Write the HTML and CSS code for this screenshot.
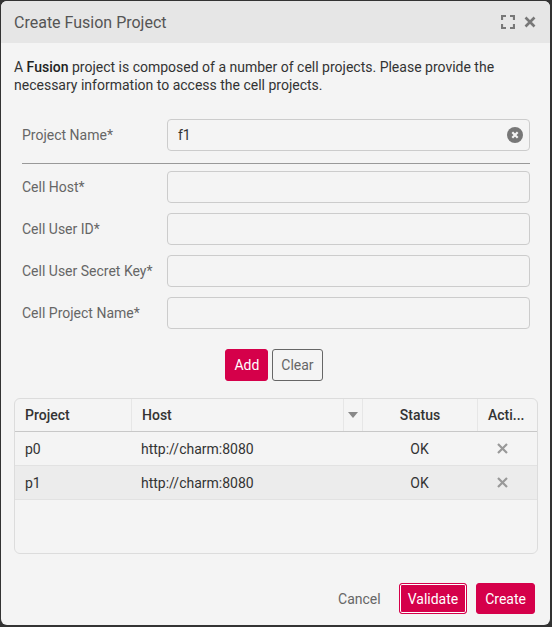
FILE: index.html
```html
<!DOCTYPE html>
<html>
<head>
<meta charset="utf-8">
<link rel="stylesheet" href="styles.css">
</head>
<body>
<div class="dialog">
  <div class="header">
    <div class="title">Create Fusion Project</div>
    <div class="header-icons">
      <svg class="icon-expand" width="14" height="14" viewBox="0 0 14 14"><path d="M1 5V1h4M9 1h4v4M13 9v4H9M5 13H1V9" fill="none" stroke="#777" stroke-width="2.2"/></svg>
      <svg class="icon-close" width="12" height="12" viewBox="0 0 12 12"><path d="M1.5 1.5l9 9M10.5 1.5l-9 9" stroke="#777" stroke-width="2.6"/></svg>
    </div>
  </div>
  <div class="body">
    <p class="desc">A <b>Fusion</b> project is composed of a number of cell projects. Please provide the necessary information to access the cell projects.</p>
    <div class="form">
      <div class="row">
        <label class="label">Project Name*</label>
        <div class="input has-value">f1
          <svg class="clear-icon" width="16" height="16" viewBox="0 0 16 16"><circle cx="8" cy="8" r="8" fill="#777"/><path d="M5.3 5.3l5.4 5.4M10.7 5.3l-5.4 5.4" stroke="#f4f4f4" stroke-width="2.2"/></svg>
        </div>
      </div>
      <div class="sep"></div>
      <div class="row"><label class="label">Cell Host*</label><div class="input"></div></div>
      <div class="row"><label class="label">Cell User ID*</label><div class="input"></div></div>
      <div class="row"><label class="label">Cell User Secret Key*</label><div class="input"></div></div>
      <div class="row"><label class="label">Cell Project Name*</label><div class="input"></div></div>
    </div>
    <div class="actions">
      <button class="btn primary">Add</button>
      <button class="btn outline">Clear</button>
    </div>
    <div class="table">
      <div class="thead">
        <div class="c c-proj">Project</div>
        <div class="c c-host">Host</div>
        <div class="c c-menu"><svg width="10" height="6" viewBox="0 0 10 6"><path d="M0 0h10L5 6z" fill="#888"/></svg></div>
        <div class="c c-status">Status</div>
        <div class="c c-act">Acti...</div>
      </div>
      <div class="tr">
        <div class="c c-proj">p0</div>
        <div class="c c-hostfull">http://charm:8080</div>
        <div class="c c-status">OK</div>
        <div class="c c-act"><svg width="11" height="11" viewBox="0 0 11 11"><path d="M1 1l9 9M10 1l-9 9" stroke="#999" stroke-width="2.2"/></svg></div>
      </div>
      <div class="tr alt">
        <div class="c c-proj">p1</div>
        <div class="c c-hostfull">http://charm:8080</div>
        <div class="c c-status">OK</div>
        <div class="c c-act"><svg width="11" height="11" viewBox="0 0 11 11"><path d="M1 1l9 9M10 1l-9 9" stroke="#999" stroke-width="2.2"/></svg></div>
      </div>
    </div>
  </div>
  <div class="footer">
    <button class="btn link">Cancel</button>
    <button class="btn primary focused">Validate</button>
    <button class="btn primary">Create</button>
  </div>
</div>
</body>
</html>
```

FILE: styles.css
```css
* { box-sizing: border-box; }
html, body { margin: 0; padding: 0; }
body {
  background: #333;
  font-family: Roboto, "Liberation Sans", sans-serif;
  font-size: 14px;
  color: #333;
  width: 552px;
  height: 627px;
  overflow: hidden;
}
.dialog {
  margin: 1px 0 0 1px;
  width: 549px;
  height: 624px;
  background: #f4f4f4;
  border-radius: 6px;
  overflow: hidden;
  display: flex;
  flex-direction: column;
}
.header {
  height: 42px;
  background: #e6e6e6;
  display: flex;
  align-items: center;
  justify-content: space-between;
  padding: 0 14px 0 13px;
  flex-shrink: 0;
}
.title { font-size: 16px; color: #555; }
.header-icons { display: flex; align-items: center; gap: 9px; }
.body { padding: 15px 12px 0 13px; flex: 1; }
.desc { margin: 0; line-height: 18px; color: #333; }
.desc b { font-weight: 500; color: #222; }
.form { padding: 0 8px; margin-top: 25px; }
.row { display: flex; align-items: center; height: 32px; margin-bottom: 10px; }
.row:first-child { margin-bottom: 0; }
.label { width: 145px; color: #666; flex-shrink: 0; }
.input {
  flex: 1;
  height: 32px;
  border: 1px solid #ccc;
  border-radius: 4px;
  display: flex;
  align-items: center;
  padding: 0 6px 0 10px;
  color: #333;
  justify-content: space-between;
}
.sep { height: 1px; background: #999; margin: 12px 0 7px; }
.actions { display: flex; justify-content: center; gap: 4px; margin-top: 20px; padding-right: 4px; }
.btn {
  font-family: inherit;
  font-size: 14px;
  height: 32px;
  padding: 0 8px;
  border-radius: 3px;
  border: 1px solid transparent;
  background: transparent;
  cursor: pointer;
}
.primary { background: #d5004a; color: #fff; border-color: #d5004a; }
.outline { border-color: #666; color: #666; }
.table {
  margin-top: 17px;
  border: 1px solid #dcdcdc;
  border-radius: 6px;
  height: 156px;
  overflow: hidden;
}
.thead, .tr { display: flex; align-items: stretch; }
.thead { height: 33px; border-bottom: 1px solid #c8c8c8; font-weight: 500; color: #333; }
.tr { height: 34px; border-bottom: 1px solid #e2e2e2; }
.tr.alt { background: #ececec; }
.c { display: flex; align-items: center; padding: 0 10px; white-space: nowrap; }
.thead .c + .c { border-left: 1px solid #e6e6e6; }
.c-proj { width: 116px; }
.c-host { width: 212px; }
.c-menu { width: 19px; padding: 0; justify-content: center; }
.c-hostfull { width: 231px; }
.c-status { width: 115px; justify-content: center; }
.c-act { flex: 1; padding-left: 10px; }
.tr .c-act { justify-content: center; padding: 0 10px 0 0; }
.footer {
  display: flex;
  justify-content: flex-end;
  align-items: center;
  gap: 9px;
  padding: 0 15px 11px 0;
  height: 42px;
  flex-shrink: 0;
}
.footer .btn { height: 31px; }
.link { color: #666; padding: 0 8px; }
.focused { box-shadow: inset 0 0 0 1px #fff; }
```
